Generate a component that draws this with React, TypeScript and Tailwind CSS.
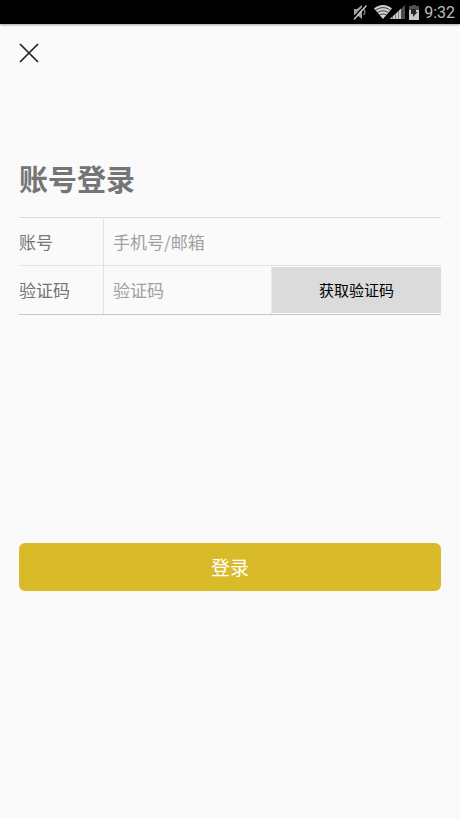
import React from "react";

function MuteIcon() {
  return (
    <svg className="w-[14px] h-[16px]" viewBox="0 0 14 16" fill="none" aria-hidden="true">
      <path d="M1 5h3l5-4v14l-5-4H1z" fill="#a0a0a0" />
      <path d="M10.5 5c1.8 1.6 1.8 4.4 0 6" stroke="#8f8f8f" strokeWidth="1.2" />
      <path d="M12 1L0 14" stroke="#000" strokeWidth="1.4" />
      <path d="M13.5 1.5L1 15.5" stroke="#c8c8c8" strokeWidth="1.4" />
    </svg>
  );
}

function WifiIcon() {
  return (
    <svg className="w-[18px] h-[14px]" viewBox="0 0 18 14" fill="none" aria-hidden="true">
      <path d="M0 3.6C5.2-1.2 12.8-1.2 18 3.6L9 14z" fill="#cfcfcf" />
      <path d="M1.6 5.4c4.4-3.7 10.4-3.7 14.8 0" stroke="#111" strokeWidth=".8" />
      <path d="M3.4 7.9c3.4-2.8 7.8-2.8 11.2 0" stroke="#111" strokeWidth=".8" />
      <path d="M5.2 10.2c2.3-1.7 5.3-1.7 7.6 0" stroke="#111" strokeWidth=".8" />
    </svg>
  );
}

function SignalIcon() {
  return (
    <svg className="w-[15px] h-[14px]" viewBox="0 0 15 14" aria-hidden="true">
      <path d="M0 14L15 0v14z" fill="#4c4c4c" />
      <path d="M0 14L11 3.7V14z" fill="#808080" />
      <path d="M0 14l2-1.9V14zM3 14v-2.8l2-1.9V14zM6 14V8.4l2-1.9V14zM9 14V5.6l2-1.9V14z" fill="#c8c8c8" />
    </svg>
  );
}

function BatteryIcon() {
  return (
    <svg className="w-[10px] h-[15px]" viewBox="0 0 10 15" aria-hidden="true">
      <path d="M3 0h4v1h3v5H0V1h3z" fill="#505050" />
      <path d="M0 5h10v10H0z" fill="#c8c8c8" />
      <path d="M2 4h5v3h1.5L4 12V9H2z" fill="#2a2a2a" />
    </svg>
  );
}

function StatusBar() {
  return (
    <header className="flex h-6 items-center justify-end bg-black pr-[5px] shadow-[0_1px_2px_rgba(0,0,0,0.35)]">
      <MuteIcon />
      <span className="ml-[7px] flex items-center">
        <WifiIcon />
        <span className="-ml-0.5 flex">
          <SignalIcon />
        </span>
      </span>
      <span className="ml-1">
        <BatteryIcon />
      </span>
      <span className="ml-[5px] pt-0.5 font-[Roboto,sans-serif] text-[16px] leading-6 text-[#bdbdbd]">9:32</span>
    </header>
  );
}

export default function App() {
  return (
    <div className="min-h-screen bg-[#fafafa] font-['Noto_Sans_CJK_SC',sans-serif] text-[#757575]">
      <StatusBar />

      <main className="px-[19px] pt-[19px]">
        <button type="button" aria-label="关闭" className="block">
          <svg className="size-5" viewBox="0 0 20 20" fill="none" stroke="#222" strokeWidth="1.7" aria-hidden="true">
            <path d="M1 1l18 18M19 1L1 19" />
          </svg>
        </button>

        <h1 className="mt-24 text-[29px] leading-[38px] font-bold">账号登录</h1>

        <form className="mt-5" onSubmit={(e) => e.preventDefault()}>
          <div className="flex h-12 border-t border-[#dcdcdc]">
            <label htmlFor="account" className="flex w-[85px] shrink-0 items-center border-r border-[#e2e2e2] text-[17px]">
              账号
            </label>
            <input
              id="account"
              type="text"
              placeholder="手机号/邮箱"
              className="min-w-0 flex-1 px-[9px] text-[17px] outline-none placeholder:text-[#a0a0a0]"
            />
          </div>

          <div className="flex h-[50px] border-t border-b border-t-[#e2e2e2] border-b-[#c6c6c6]">
            <label htmlFor="code" className="flex w-[85px] shrink-0 items-center border-r border-[#e2e2e2] text-[17px]">
              验证码
            </label>
            <input
              id="code"
              type="text"
              placeholder="验证码"
              className="min-w-0 flex-1 px-[9px] text-[17px] outline-none placeholder:text-[#a0a0a0]"
            />
            <div className="flex w-[170px] shrink-0 border-l border-[#e8e8e8] py-px">
              <button type="button" className="flex-1 bg-[#dbdbdb] text-[15px] text-black">
                获取验证码
              </button>
            </div>
          </div>

          <button
            type="submit"
            className="mt-[228px] h-12 w-full rounded-md bg-[#d9bb29] text-[19px] text-white"
          >
            登录
          </button>
        </form>
      </main>
    </div>
  );
}
